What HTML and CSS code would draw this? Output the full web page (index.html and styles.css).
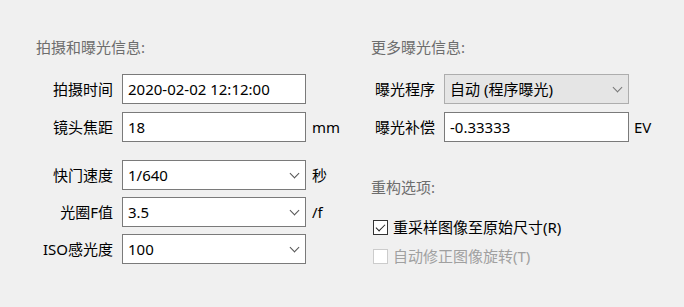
FILE: index.html
```html
<!DOCTYPE html>
<html>

<head>
  <title>exposure</title>
  <link rel="stylesheet" href="styles.css">
</head>

<body>
  <main class="page">
    <section class="group left">
      <p class="heading">拍摄和曝光信息:</p>

      <div class="fields">
        <label class="label">拍摄时间</label>
        <div class="box">2020-02-02 12:12:00</div>
        <span class="unit"></span>

        <label class="label">镜头焦距</label>
        <div class="box">18</div>
        <span class="unit">mm</span>
      </div>

      <div class="fields second">
        <label class="label">快门速度</label>
        <div class="box combo">1/640<span class="chevron"></span></div>
        <span class="unit">秒</span>

        <label class="label">光圈F值</label>
        <div class="box combo">3.5<span class="chevron"></span></div>
        <span class="unit">/f</span>

        <label class="label">ISO感光度</label>
        <div class="box combo">100<span class="chevron"></span></div>
        <span class="unit"></span>
      </div>
    </section>

    <section class="group right">
      <p class="heading">更多曝光信息:</p>

      <div class="fields">
        <label class="label">曝光程序</label>
        <div class="box combo select">自动 (程序曝光)<span class="chevron"></span></div>
        <span class="unit"></span>

        <label class="label">曝光补偿</label>
        <div class="box">-0.33333</div>
        <span class="unit">EV</span>
      </div>

      <p class="heading rebuild">重构选项:</p>

      <ul class="checks">
        <li class="check"><span class="tick checked"></span>重采样图像至原始尺寸(R)</li>
        <li class="check disabled"><span class="tick"></span>自动修正图像旋转(T)</li>
      </ul>
    </section>
  </main>
</body>

</html>
```

FILE: styles.css
```css
* {
  box-sizing: border-box;
}

html {
  background-color: #f0f0f0;
  color: #000;
  font: 15px/20px "Noto Sans", "Noto Sans CJK SC", sans-serif;
}

body {
  margin: 0;
  width: 684px;
  height: 307px;
  overflow: hidden;
}

.page {
  display: flex;
  padding: 37px 0 0 36px;
}

p {
  margin: 0;
}

.heading {
  color: #6d6d6d;
}

.group.left {
  width: 335px;
}

.fields {
  display: grid;
  grid-template-columns: 86px 184px auto;
  row-gap: 8px;
  align-items: center;
  margin-top: 17px;
}

.right .fields {
  grid-template-columns: 73px 185px auto;
}

.fields.second {
  margin-top: 18px;
  row-gap: 7px;
}

.label {
  text-align: right;
  padding-right: 9px;
  white-space: nowrap;
}

.box {
  position: relative;
  height: 30px;
  border: 1px solid #7a7a7a;
  background-color: #fff;
  padding: 0 0 0 5px;
  line-height: 28px;
}

.unit {
  padding-left: 6px;
}

.right .unit {
  padding-left: 5px;
}

.select {
  background-color: #e5e5e5;
  border-color: #adadad;
}

.chevron {
  position: absolute;
  right: 7px;
  top: 9px;
  width: 7px;
  height: 7px;
  border-right: 1px solid #555;
  border-bottom: 1px solid #555;
  transform: rotate(45deg);
}

.select .chevron {
  border-color: #777;
}

.rebuild {
  margin-top: 35px;
}

.checks {
  list-style-type: none;
  margin: 20px 0 0 2px;
  padding: 0;
}

.check {
  display: flex;
  align-items: center;
  gap: 5px;
  height: 20px;
  margin-bottom: 9px;
}

.tick {
  position: relative;
  width: 15px;
  height: 15px;
  border: 1px solid #333;
  background-color: #fff;
}

.tick.checked:after {
  content: "";
  position: absolute;
  left: 4px;
  top: 1px;
  width: 4px;
  height: 8px;
  border-right: 1.5px solid #222;
  border-bottom: 1.5px solid #222;
  transform: rotate(45deg);
}

.disabled {
  color: #a0a0a0;
}

.disabled .tick {
  border-color: #ccc;
}
```
